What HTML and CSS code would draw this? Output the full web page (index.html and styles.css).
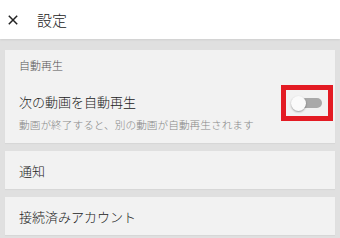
FILE: index.html
```html
<!DOCTYPE html>
<html lang="ja">
<head>
<meta charset="utf-8">
<link rel="stylesheet" href="styles.css">
</head>
<body>
<header class="topbar">
  <svg class="close" width="10" height="10" viewBox="0 0 10 10"><path d="M0.8 0.8L9.2 9.2M9.2 0.8L0.8 9.2" stroke="#222" stroke-width="1.5" fill="none"/></svg>
  <span class="title">設定</span>
</header>
<main class="content">
  <section class="card card-autoplay">
    <div class="section-label">自動再生</div>
    <div class="row">
      <span class="row-title">次の動画を自動再生</span>
      <div class="highlight">
        <div class="switch">
          <div class="track"></div>
          <div class="thumb"></div>
        </div>
      </div>
    </div>
    <div class="row-sub">動画が終了すると、別の動画が自動再生されます</div>
  </section>
  <section class="card card-simple">通知</section>
  <section class="card card-simple">接続済みアカウント</section>
</main>
</body>
</html>
```
FILE: styles.css
```css
html, body {
  margin: 0;
  padding: 0;
  height: 100%;
}
body {
  font-family: "Noto Sans CJK JP", "Noto Sans", sans-serif;
  font-weight: 300;
  background: #e0e0e0;
  color: #212121;
}
.topbar {
  height: 39px;
  background: #fff;
  display: flex;
  align-items: center;
  padding-left: 8px;
  box-shadow: 0 1px 2px rgba(0,0,0,0.08);
  position: relative;
}
.close {
  display: block;
  margin-top: 1px;
}
.title {
  margin-left: 19px;
  font-size: 15px;
  line-height: 20px;
  color: #222;
}
.content {
  padding: 11px 5px 0;
  display: flex;
  flex-direction: column;
  gap: 8px;
}
.card {
  background: #f2f2f2;
  box-shadow: 0 1px 1px rgba(0,0,0,0.04);
}
.card-autoplay {
  padding: 7px 0 10px 14px;
}
.section-label {
  font-size: 11px;
  line-height: 16px;
  color: #555;
}
.row {
  margin-top: 20px;
  display: flex;
  align-items: center;
  justify-content: space-between;
  height: 18px;
}
.row-title {
  font-size: 13px;
  line-height: 18px;
  color: #212121;
}
.highlight {
  width: 42px;
  height: 26px;
  border: 5px solid #e31b23;
  margin: -8px 2px -10px 0;
  display: flex;
  align-items: center;
  justify-content: center;
  flex-shrink: 0;
}
.switch {
  position: relative;
  width: 30px;
  height: 10px;
}
.track {
  width: 30px;
  height: 10px;
  border-radius: 5px;
  background: #a9a9a9;
}
.thumb {
  position: absolute;
  left: -1.5px;
  top: -2.5px;
  width: 15px;
  height: 15px;
  border-radius: 50%;
  background: #fafafa;
  box-shadow: 0 1px 2px rgba(0,0,0,0.35);
}
.row-sub {
  margin-top: 6px;
  font-size: 10.7px;
  line-height: 16px;
  color: #888;
}
.card-simple {
  height: 38px;
  padding-left: 14px;
  display: flex;
  align-items: center;
  font-size: 13px;
  color: #212121;
}
```
